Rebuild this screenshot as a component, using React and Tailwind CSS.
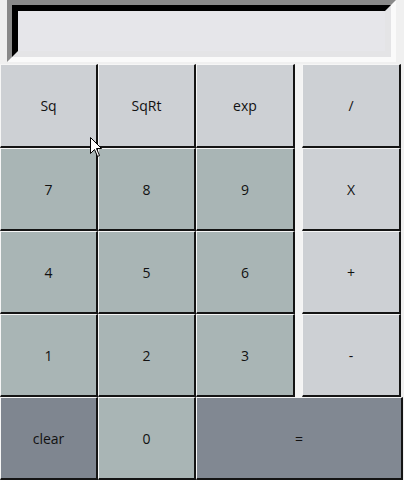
import React from 'react';

const FONT = { fontFamily: '"Open Sans", "Noto Sans", sans-serif' };

const TONE = {
  light: 'bg-[#cdd0d4]',
  digit: 'bg-[#a9b5b5]',
  dark: 'bg-[#7f8690]',
  eq: 'bg-[#818892]',
};

function Key({ label, tone = 'light', className = '' }) {
  return (
    <div
      className={`flex items-center justify-center h-full border-t border-l border-t-[#f6f6f6] border-l-[#f6f6f6] border-r-2 border-b-2 border-r-[#141414] border-b-[#141414] text-[14px] text-[#111] ${TONE[tone]} ${className}`}
    >
      {label}
    </div>
  );
}

function Row({ keys, h = 'h-[83px]' }) {
  return (
    <div className={`flex ${h}`}>
      <Key label={keys[0][0]} tone={keys[0][1]} className="w-[98px]" />
      <Key label={keys[1][0]} tone={keys[1][1]} className="w-[98px]" />
      <Key label={keys[2][0]} tone={keys[2][1]} className="w-[99px]" />
      <div className="w-[7px] bg-[#f4f4f4]" />
      <Key label={keys[3][0]} tone={keys[3][1]} className="w-[99px]" />
    </div>
  );
}

export default function App() {
  return (
    <div className="relative w-[404px] h-[480px] bg-[#f0f0f0] overflow-hidden" style={FONT}>
      <div className="ml-[7px] w-[389px] h-[62px] border-[5px] border-t-[#8a8a8a] border-l-[#8a8a8a] border-b-[#fafafa] border-r-[#fafafa]">
        <div className="h-full border-[6px] border-t-black border-l-black border-b-[#e4e4e6] border-r-[#e4e4e6] bg-[#e6e6ea]" />
      </div>
      <div className="mt-[2px] flex flex-col">
        <Row h="h-[84px]" keys={[['Sq', 'light'], ['SqRt', 'light'], ['exp', 'light'], ['/', 'light']]} />
        <Row keys={[['7', 'digit'], ['8', 'digit'], ['9', 'digit'], ['X', 'light']]} />
        <Row keys={[['4', 'digit'], ['5', 'digit'], ['6', 'digit'], ['+', 'light']]} />
        <Row keys={[['1', 'digit'], ['2', 'digit'], ['3', 'digit'], ['-', 'light']]} />
        <div className="flex h-[83px]">
          <Key label="clear" tone="dark" className="w-[98px]" />
          <Key label="0" tone="digit" className="w-[98px]" />
          <Key label="=" tone="eq" className="w-[207px]" />
        </div>
      </div>
      {/* mouse pointer */}
      <svg className="absolute left-[90px] top-[137px]" width="13" height="21" viewBox="0 0 13 21">
        <path d="M0.5 0.5 L0.5 16.5 L4.5 12.5 L7.5 19.5 L9.5 18.5 L6.5 11.5 L11.5 11.5 Z" fill="#fff" stroke="#000" strokeWidth="1" />
      </svg>
    </div>
  );
}
